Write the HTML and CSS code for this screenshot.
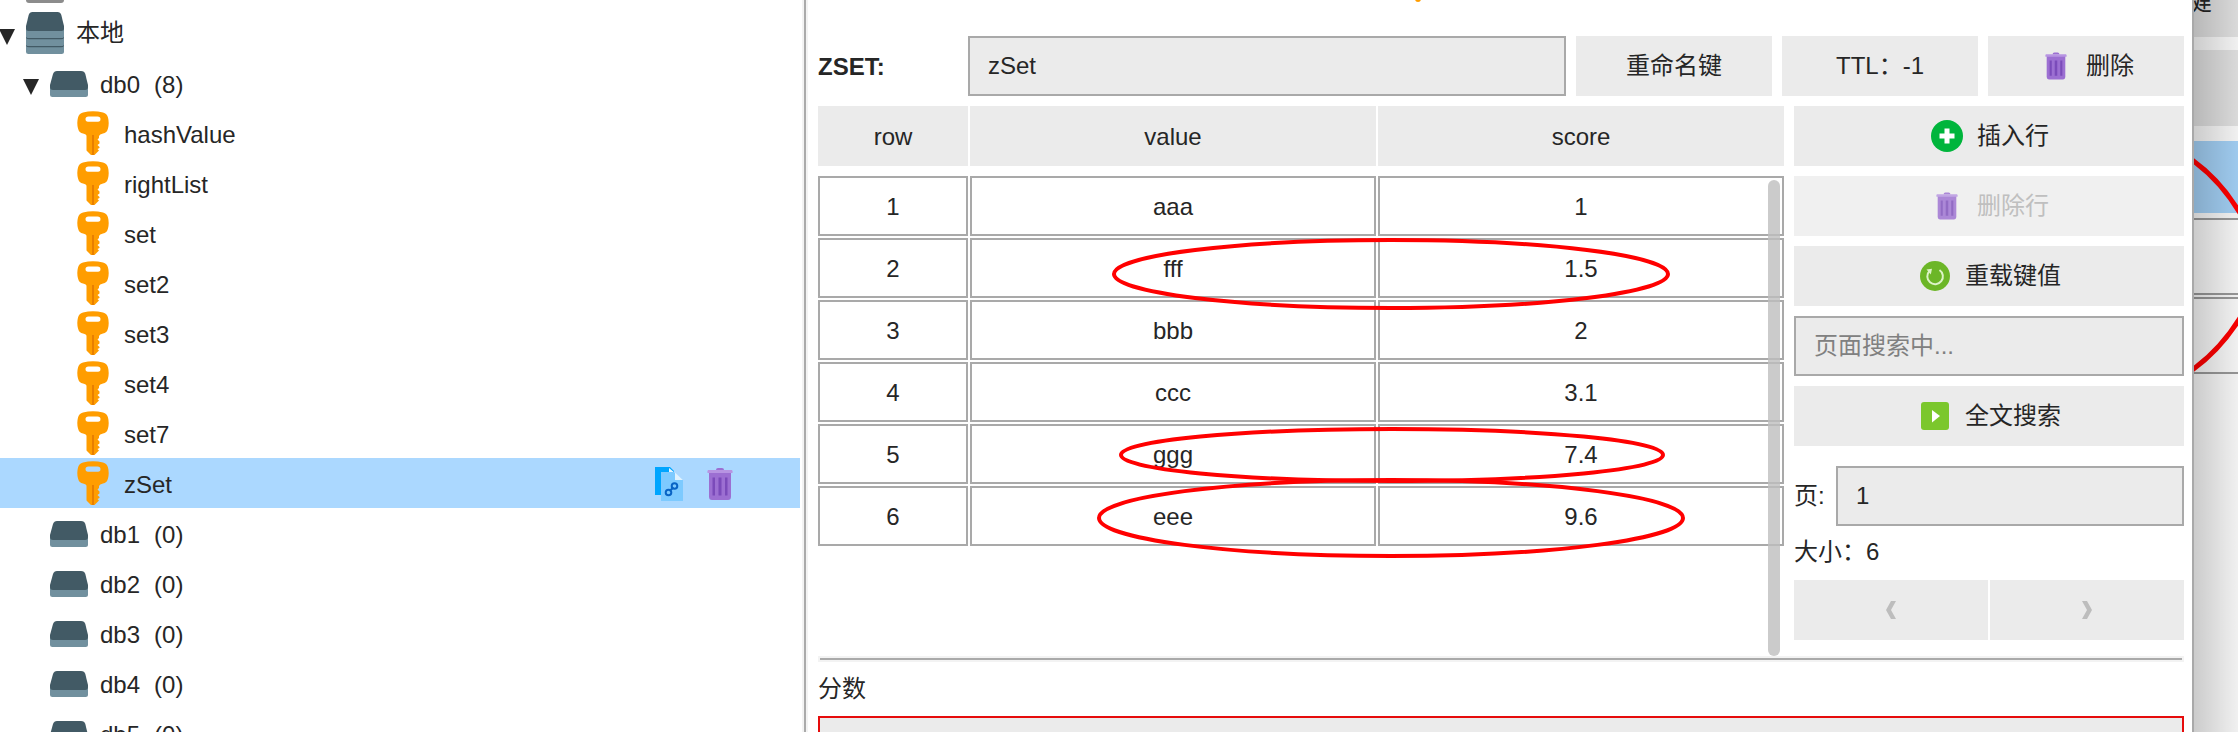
FILE: index.html
```html
<!DOCTYPE html>
<html lang="zh-CN">
<head>
    <meta charset="UTF-8">
    <meta name="viewport" content="width=device-width, initial-scale=1.0">
    <title>zSet</title>
    <link rel="stylesheet" href="styles.css">
</head>
<body>
    <!-- Icon definitions -->
    <svg class="defs" aria-hidden="true">
        <symbol id="arrow" viewBox="0 0 16 16">
            <path d="M0 0H16L8 16Z" fill="#262626"/>
        </symbol>
        <symbol id="server" viewBox="0 0 38 42">
            <path d="M0 16H38V39.500Q38 42 35.500 42H2.500Q0 42 0 39.500Z" fill="#71909e"/>
            <path d="M0 24.500Q0 26 3 26H35Q38 26 38 24.500V26Q37 27.300 35 27.300H3Q1 27.300 0 26ZM0 32.500Q0 34 3 34H35Q38 34 38 32.500V34Q37 35.300 35 35.300H3Q1 35.300 0 34Z" fill="#425a65"/>
            <path d="M6.500 0H31.500Q34.500 0 35.300 3L38 14V17Q38 19 35.500 19H2.500Q0 19 0 17V14L2.700 3Q3.500 0 6.500 0Z" fill="#425a65"/>
        </symbol>
        <symbol id="db" viewBox="0 0 38 26">
            <path d="M0 15H38V23.500Q38 26 35.500 26H2.500Q0 26 0 23.500Z" fill="#71909e"/>
            <path d="M7 0H31Q34.500 0 35.300 3L38 14V16Q38 19 35 19H3Q0 19 0 16V14L3 3Q4 0 7 0Z" fill="#425a65"/>
        </symbol>
        <symbol id="key" viewBox="0 0 32 44">
            <path fill-rule="evenodd" d="M6 1.500Q16-1.200 26 1.500Q30 2.500 31 6.500Q32.400 12 31 17.500Q29.800 22 26 22.500Q22.500 23.300 22 25V27L20.500 28.500L22.500 30.500V32.500L20.500 34L22.500 36V37L20.500 38L22 39.500L17.500 44H14L9.500 39.500V25Q9.500 23.300 6 22.500Q2.200 22 1 17.500Q-.400 12 1 6.500Q2 2.500 6 1.500ZM11.500 5.500Q8.500 5.500 8.500 8Q8.500 10.700 11 10.700H21Q23.500 10.700 23.500 8Q23.500 5.500 20.500 5.500Z" fill="#ff9d00"/>
            <path d="M15 24H17V44H15Z" fill="#e87f00"/>
        </symbol>
        <symbol id="trash" viewBox="0 0 26 32">
            <path d="M2 4H24V28.500Q24 32 21 32H5Q2 32 2 28.500Z" fill="#9c6fd2"/>
            <path d="M5.500 9.500H8V27.500H5.500ZM11.500 9.500H14.500V27.500H11.500ZM18 9.500H20.500V27.500H18Z" fill="#7b4bba"/>
            <path d="M1 2H25Q26 3.500 25.500 5H.500Q0 3.500 1 2Z" fill="#b794e2"/>
            <path d="M9 2Q9 0 11 0H15Q17 0 17 2Z" fill="#9c6fd2"/>
        </symbol>
        <symbol id="copy" viewBox="0 0 28 34">
            <path d="M0 0H15L19 4V28H0Z" fill="#00a5ff"/>
            <path d="M14 1L20 6V5H14Z" fill="#e8f5ff"/>
            <path d="M6 5H19L28 13V34H6Z" fill="#7dcaff"/>
            <path d="M20 5.500L28 13H20Z" fill="#dff2ff"/>
            <g fill="none" stroke="#0964c5" stroke-width="2">
                <circle cx="13.500" cy="25.500" r="2.800"/>
                <circle cx="19.500" cy="19" r="2.800"/>
                <path d="M14.500 24L18.500 20.500"/>
            </g>
        </symbol>
        <symbol id="plus" viewBox="0 0 32 32">
            <circle cx="16" cy="16" r="16" fill="#00b53c"/>
            <path d="M13.500 8.500H18.500V13.500H23.500V18.500H18.500V23.500H13.500V18.500H8.500V13.500H13.500Z" fill="#fff"/>
        </symbol>
        <symbol id="reload" viewBox="0 0 30 30">
            <circle cx="15" cy="15" r="15" fill="#6cb627"/>
            <path d="M19.500 9A7.800 7.800 0 1 1 9.500 10" fill="none" stroke="#dcf3c6" stroke-width="2"/>
            <path d="M6.500 8.500L12 7.800L10.800 13.500Z" fill="#dcf3c6"/>
        </symbol>
        <symbol id="play" viewBox="0 0 28 28">
            <rect width="28" height="28" rx="3" fill="#7bc72c"/>
            <path d="M11 8L19 14L11 20.500Z" fill="#fff"/>
        </symbol>
    </svg>

    <div class="app">
        <nav class="sidebar">
            <ul class="tree">
                <li class="node level-0"><span class="offline"></span></li>
                <li class="node level-0">
                    <svg class="arrow"><use href="#arrow"/></svg>
                    <svg class="icon-server"><use href="#server"/></svg>
                    <span class="name cjk">本地</span>
                </li>
                <li class="node level-1">
                    <svg class="arrow"><use href="#arrow"/></svg>
                    <svg class="icon-db"><use href="#db"/></svg>
                    <span class="name">db0</span><span class="count">(8)</span>
                </li>
                <li class="node level-2"><svg class="icon-key"><use href="#key"/></svg><span class="name">hashValue</span></li>
                <li class="node level-2"><svg class="icon-key"><use href="#key"/></svg><span class="name">rightList</span></li>
                <li class="node level-2"><svg class="icon-key"><use href="#key"/></svg><span class="name">set</span></li>
                <li class="node level-2"><svg class="icon-key"><use href="#key"/></svg><span class="name">set2</span></li>
                <li class="node level-2"><svg class="icon-key"><use href="#key"/></svg><span class="name">set3</span></li>
                <li class="node level-2"><svg class="icon-key"><use href="#key"/></svg><span class="name">set4</span></li>
                <li class="node level-2"><svg class="icon-key"><use href="#key"/></svg><span class="name">set7</span></li>
                <li class="node level-2 selected">
                    <svg class="icon-key"><use href="#key"/></svg><span class="name">zSet</span>
                    <span class="actions">
                        <button type="button" class="icon-btn" aria-label="复制"><svg class="icon-copy"><use href="#copy"/></svg></button>
                        <button type="button" class="icon-btn" aria-label="删除"><svg class="icon-trash"><use href="#trash"/></svg></button>
                    </span>
                </li>
                <li class="node level-1 closed"><svg class="icon-db"><use href="#db"/></svg><span class="name">db1</span><span class="count">(0)</span></li>
                <li class="node level-1 closed"><svg class="icon-db"><use href="#db"/></svg><span class="name">db2</span><span class="count">(0)</span></li>
                <li class="node level-1 closed"><svg class="icon-db"><use href="#db"/></svg><span class="name">db3</span><span class="count">(0)</span></li>
                <li class="node level-1 closed"><svg class="icon-db"><use href="#db"/></svg><span class="name">db4</span><span class="count">(0)</span></li>
                <li class="node level-1 closed"><svg class="icon-db"><use href="#db"/></svg><span class="name">db5</span><span class="count">(0)</span></li>
            </ul>
        </nav>

        <div class="splitter"></div>

        <main class="panel">
            <span class="tab-mark"></span>
            <div class="toolbar">
                <label class="type" for="keyName">ZSET:</label>
                <input type="text" class="field" id="keyName" value="zSet">
                <button type="button" class="btn">重命名键</button>
                <button type="button" class="btn">TTL：-1</button>
                <button type="button" class="btn"><span class="btn-icon"><svg class="small-trash"><use href="#trash"/></svg></span>删除</button>
            </div>

            <div class="content">
                <div class="table-wrap">
                    <table>
                        <thead>
                            <tr><th>row</th><th>value</th><th>score</th></tr>
                        </thead>
                        <tbody>
                            <tr><td>1</td><td>aaa</td><td>1</td></tr>
                            <tr><td>2</td><td>fff</td><td>1.5</td></tr>
                            <tr><td>3</td><td>bbb</td><td>2</td></tr>
                            <tr><td>4</td><td>ccc</td><td>3.1</td></tr>
                            <tr><td>5</td><td>ggg</td><td>7.4</td></tr>
                            <tr><td>6</td><td>eee</td><td>9.6</td></tr>
                        </tbody>
                    </table>
                    <div class="scrollbar"></div>
                    <svg class="marks" viewBox="0 0 966 550" fill="none" stroke="#f00" stroke-width="4" aria-hidden="true">
                        <ellipse cx="573" cy="168" rx="277" ry="34"/>
                        <ellipse cx="574" cy="349" rx="271" ry="26"/>
                        <ellipse cx="573" cy="412" rx="292" ry="38"/>
                    </svg>
                </div>

                <div class="tools">
                    <button type="button" class="btn"><span class="btn-icon"><svg class="icon-plus"><use href="#plus"/></svg></span>插入行</button>
                    <button type="button" class="btn" disabled><span class="btn-icon"><svg class="small-trash"><use href="#trash"/></svg></span>删除行</button>
                    <button type="button" class="btn"><span class="btn-icon"><svg class="icon-reload"><use href="#reload"/></svg></span>重载键值</button>
                    <input type="text" class="field" placeholder="页面搜索中..." aria-label="页面搜索">
                    <button type="button" class="btn"><span class="btn-icon"><svg class="icon-play"><use href="#play"/></svg></span>全文搜索</button>
                    <div class="page-row">
                        <label for="page">页:</label>
                        <input type="text" class="field" id="page" value="1">
                    </div>
                    <p class="size">大小：6</p>
                    <div class="pager">
                        <button type="button" class="btn" aria-label="上一页"><svg viewBox="0 0 10 18"><path d="M5 0H10L5 9L10 18H5L0 9Z" fill="#bdbdbd"/></svg></button>
                        <button type="button" class="btn" aria-label="下一页"><svg viewBox="0 0 10 18"><path d="M5 0H0L5 9L0 18H5L10 9Z" fill="#bdbdbd"/></svg></button>
                    </div>
                </div>
            </div>

            <div class="divider"></div>
            <label class="score-label" for="score">分数</label>
            <textarea class="score" id="score"></textarea>
        </main>

        <!-- Window behind -->
        <aside class="behind">
            <div class="behind-btn top"><span>键</span></div>
            <div class="behind-btn"></div>
            <div class="behind-row active"></div>
            <div class="behind-row"></div>
            <div class="behind-row"></div>
            <svg class="behind-mark" viewBox="0 0 44 400" fill="none" stroke="#f00" stroke-width="5" aria-hidden="true">
                <path d="M-2 160Q26 180 46 213M46 318Q26 350 -2 370"/>
            </svg>
            <div class="shade"></div>
        </aside>
    </div>
</body>
</html>
```
FILE: styles.css
```css
* {
    margin: 0;
    padding: 0;
    box-sizing: border-box;
}

body {
    font-family: "Liberation Sans", "Noto Sans CJK SC", sans-serif;
    font-size: 24px;
    line-height: 32px;
    color: #262626;
    background: #fff;
}

button,
input,
textarea {
    font: inherit;
    color: inherit;
    border: none;
    border-radius: 0;
}

svg {
    display: block;
    flex: none;
}

.defs {
    position: absolute;
    width: 0;
    height: 0;
}

.app {
    display: flex;
    height: 100vh;
    overflow: hidden;
}

/* Tree */
.sidebar {
    flex: 0 0 800px;
    overflow: hidden;
}

.tree {
    list-style: none;
    margin-top: -42px;
}

.node {
    display: flex;
    align-items: center;
    height: 50px;
}

.level-1 {
    padding-left: 23px;
}

.level-1.closed {
    padding-left: 50px;
}

.level-2 {
    padding-left: 77px;
}

.selected {
    background: #abd8ff;
}

.name {
    padding-top: 4px;
    margin-left: 12px;
}

.name.cjk {
    padding-top: 0;
}

.level-2 .name {
    margin-left: 15px;
}

.count {
    padding-top: 4px;
    margin-left: 14px;
}

.arrow {
    width: 16px;
    height: 16px;
    margin: 8px 11px 0 0;
}

.level-0 .arrow {
    margin-left: -1px;
}

.icon-server {
    width: 38px;
    height: 42px;
}

.icon-db {
    width: 38px;
    height: 26px;
    margin-top: 2px;
}

.icon-key {
    width: 32px;
    height: 44px;
}

.offline {
    width: 38px;
    height: 40px;
    margin-left: 26px;
    border-radius: 3px;
    background: #8c8c8c;
}

.actions {
    display: flex;
    gap: 24px;
    margin-left: auto;
    margin-right: 67px;
    padding-top: 2px;
}

.icon-btn {
    display: flex;
    align-items: center;
    background: none;
    cursor: pointer;
}

.icon-copy {
    width: 28px;
    height: 34px;
}

.icon-trash {
    width: 26px;
    height: 32px;
}

/* Splitters */
.splitter {
    flex: 0 0 6px;
    margin-left: 2px;
    background: #aaa;
    border: solid #f3f3f3;
    border-width: 0 2px;
}

.divider {
    height: 6px;
    background: #aaa;
    border: 2px solid #f3f3f3;
}

/* Key panel */
.panel {
    position: relative;
    flex: 1;
    min-width: 0;
    padding: 36px 8px 0 10px;
    overflow: hidden;
}

.tab-mark {
    position: absolute;
    top: -4px;
    left: 607px;
    width: 6px;
    height: 6px;
    border-radius: 3px;
    background: #ff9d00;
}

.toolbar {
    display: grid;
    grid-template-columns: 150px 1fr 206px 206px 206px;
    margin-bottom: 10px;
}

.toolbar .btn {
    margin-left: 10px;
}

.type {
    font-weight: bold;
    line-height: 62px;
    height: 60px;
}

.field {
    width: 100%;
    min-width: 0;
    height: 60px;
    padding: 0 18px;
    background: #ebebeb;
    border: 2px solid #a9a9a9;
    outline: none;
}

.field::placeholder {
    color: #808080;
    opacity: 1;
}

.btn {
    display: flex;
    align-items: center;
    justify-content: center;
    height: 60px;
    background: #ebebeb;
    cursor: pointer;
}

.btn:disabled {
    background: #f0f0f0;
    color: #bfbfbf;
    cursor: default;
}

.btn:disabled svg {
    opacity: 0.8;
}

.btn-icon {
    display: flex;
    justify-content: center;
    width: 36px;
    margin-right: 12px;
}

.small-trash {
    width: 22px;
    height: 28px;
}

.icon-plus {
    width: 32px;
    height: 32px;
}

.icon-reload {
    width: 30px;
    height: 30px;
}

.icon-play {
    width: 28px;
    height: 28px;
}

.content {
    display: grid;
    grid-template-columns: 1fr 390px;
    gap: 10px;
    height: 550px;
}

.table-wrap {
    position: relative;
}

table,
thead,
tbody {
    display: block;
}

thead {
    margin-bottom: 10px;
}

tr {
    display: grid;
    grid-template-columns: 150px 1fr 1fr;
    gap: 2px;
    margin-bottom: 2px;
}

th,
td {
    height: 60px;
    line-height: 58px;
    font-weight: normal;
    text-align: center;
}

th {
    padding-top: 2px;
    background: #ebebeb;
}

td {
    border: 2px solid #a9a9a9;
}

.scrollbar {
    position: absolute;
    top: 74px;
    right: 4px;
    bottom: 0;
    width: 12px;
    border-radius: 6px;
    background: rgba(190, 190, 190, 0.8);
}

.marks {
    position: absolute;
    top: 0;
    left: 0;
    width: 100%;
    height: 100%;
    pointer-events: none;
}

.tools {
    display: flex;
    flex-direction: column;
    gap: 10px;
}

.page-row {
    display: grid;
    grid-template-columns: 42px 1fr;
    align-items: center;
    margin-top: 10px;
}

.size {
    height: 34px;
    line-height: 32px;
}

.pager {
    display: grid;
    grid-template-columns: 1fr 1fr;
    gap: 2px;
}

.pager svg {
    width: 10px;
    height: 18px;
}

.score-label {
    display: block;
    line-height: 54px;
}

.score {
    display: block;
    width: 100%;
    height: 120px;
    background: #ebebeb;
    border: 2px solid #e60c0c;
    outline: none;
    resize: none;
}

/* Window behind */
.behind {
    position: relative;
    flex: 0 0 46px;
    border-left: 2px solid #a9a9a9;
    background: #f8f8f8;
    overflow: hidden;
}

.behind-btn {
    height: 76px;
    margin-bottom: 15px;
    background: #e0e0e0;
}

.behind-btn.top {
    display: flex;
    align-items: flex-end;
    height: 37px;
    margin-bottom: 13px;
    padding-bottom: 20px;
    font-size: 28px;
}

.behind-btn.top span {
    margin-left: -10px;
}

.behind-row {
    height: 77px;
    margin-bottom: 2px;
    border: solid #999;
    border-width: 2px 0;
}

.behind-row.active {
    height: 72px;
    margin-bottom: 5px;
    background: #a3d0f5;
    border: none;
}

.behind-mark {
    position: absolute;
    top: 0;
    left: 0;
    width: 44px;
    height: 400px;
}

.shade {
    position: absolute;
    inset: 0;
    background: linear-gradient(to right, rgba(0, 0, 0, 0.18), rgba(0, 0, 0, 0.03));
}
```
